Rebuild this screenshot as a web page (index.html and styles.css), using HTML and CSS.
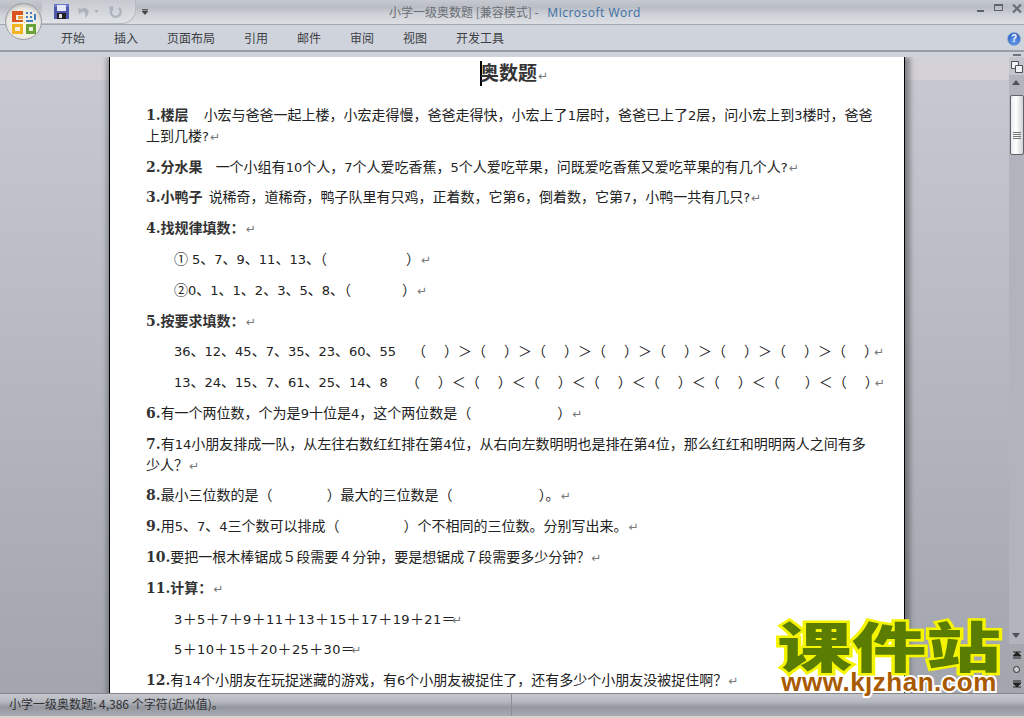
FILE: index.html
```html
<!DOCTYPE html>
<html lang="zh-CN">
<head>
  <meta charset="UTF-8" />
  <title>小学一级奥数题 [兼容模式] - Microsoft Word</title>
  <link rel="stylesheet" href="styles.css">
</head>
<body>
<div class="app">
  <header class="titlebar">
    <div class="qat">
      <svg class="save" width="15" height="15" viewBox="0 0 15 15"><rect width="15" height="15" fill="#4d58ad"/><rect x="0" y="0" width="15" height="3" fill="#6a76c8"/><rect x="3" y="1" width="9" height="6" fill="#e4e8f6"/><rect x="3" y="9" width="9" height="6" fill="#222"/><rect x="5" y="10" width="3" height="4" fill="#ddd"/></svg>
      <svg class="undo" width="14" height="14" viewBox="0 0 14 14"><path d="M1 3 L2 9 L5 7 C8 6 9 8 8 13 C12 10 13 6 10 4 C8 2 6 3 4 4 Z" fill="#aeb3bd"/></svg>
      <svg class="drop" width="5" height="3" viewBox="0 0 5 3"><path d="M0 0 H5 L2.5 3 Z" fill="#aeb3bd"/></svg>
      <svg class="redo" width="13" height="14" viewBox="0 0 13 14"><path d="M3.5 3 A5 5 0 1 0 10 3 M3 1 V6 M3 3 H0" fill="none" stroke="#aeb3bd" stroke-width="2.4"/></svg>
    </div>
    <svg class="qat-more" width="6" height="6" viewBox="0 0 6 6"><path d="M0 0.5 H6 M0 2 H6 L3 5.5 L0 2 Z" fill="#444" stroke="#444" stroke-width="0.8"/></svg>
    <div class="doc-title">小学一级奥数题 [兼容模式] - <span class="word-name">Microsoft Word</span></div>
    <div class="win-btns">
      <span class="win-min"></span>
      <span class="win-max"></span>
      <svg class="win-close" width="10" height="9" viewBox="0 0 10 9"><path d="M1 0.5 L9 8.5 M9 0.5 L1 8.5" stroke="#6a6e75" stroke-width="2.2" fill="none"/></svg>
    </div>
  </header>

  <nav class="tabs">
    <span class="tab">开始</span>
    <span class="tab">插入</span>
    <span class="tab">页面布局</span>
    <span class="tab">引用</span>
    <span class="tab">邮件</span>
    <span class="tab">审阅</span>
    <span class="tab">视图</span>
    <span class="tab">开发工具</span>
    <span class="help">?</span>
  </nav>

  <main class="workspace">
    <div class="page-wrap">
      <article class="page">
        <h1 class="doc-h"><span class="caret"></span>奥数题<i class="pm">↵</i></h1>
        <p><b>1.楼层</b><span class="sp sp15"></span>小宏与爸爸一起上楼，小宏走得慢，爸爸走得快，小宏上了<span class="n">1</span>层时，爸爸已上了<span class="n">2</span>层，问小宏上到<span class="n">3</span>楼时，爸爸上到几楼<span class="n">?</span><i class="pm">↵</i></p>
        <p><b>2.分水果</b><span class="sp sp13"></span>一个小组有<span class="n">10</span>个人，<span class="n">7</span>个人爱吃香蕉，<span class="n">5</span>个人爱吃苹果，问既爱吃香蕉又爱吃苹果的有几个人<span class="n">?</span><i class="pm">↵</i></p>
        <p><b>3.小鸭子</b><span class="sp sp6"></span>说稀奇，道稀奇，鸭子队里有只鸡，正着数，它第<span class="n">6</span>，倒着数，它第<span class="n">7</span>，小鸭一共有几只<span class="n">?</span><i class="pm">↵</i></p>
        <p><b>4.找规律填数：</b><i class="pm">↵</i></p>
        <p class="ind">①<span class="sp sp4"></span><span class="n">5</span>、<span class="n">7</span>、<span class="n">9</span>、<span class="n">11</span>、<span class="n">13</span>、（<span class="gap g1"></span>）<i class="pm">↵</i></p>
        <p class="ind">②<span class="n">0</span>、<span class="n">1</span>、<span class="n">1</span>、<span class="n">2</span>、<span class="n">3</span>、<span class="n">5</span>、<span class="n">8</span>、（<span class="gap g2"></span>）<i class="pm">↵</i></p>
        <p><b>5.按要求填数：</b><i class="pm">↵</i></p>
        <p class="ind"><span class="n">36</span>、<span class="n">12</span>、<span class="n">45</span>、<span class="n">7</span>、<span class="n">35</span>、<span class="n">23</span>、<span class="n">60</span>、<span class="n">55</span><span class="sp sp16"></span>（<span class="gap p"></span>）＞（<span class="gap p"></span>）＞（<span class="gap p"></span>）＞（<span class="gap p"></span>）＞（<span class="gap p"></span>）＞（<span class="gap p"></span>）＞（<span class="gap p"></span>）＞（<span class="gap p"></span>）<i class="pm pm-tight">↵</i></p>
        <p class="ind"><span class="n">13</span>、<span class="n">24</span>、<span class="n">15</span>、<span class="n">7</span>、<span class="n">61</span>、<span class="n">25</span>、<span class="n">14</span>、<span class="n">8</span><span class="sp sp18"></span>（<span class="gap p"></span>）＜（<span class="gap p"></span>）＜（<span class="gap p"></span>）＜（<span class="gap p"></span>）＜（<span class="gap p"></span>）＜（<span class="gap p"></span>）＜（<span class="gap p-wide"></span>）＜（<span class="gap p"></span>）<i class="pm pm-tight">↵</i></p>
        <p><b>6.</b>有一个两位数，个为是<span class="n">9</span>十位是<span class="n">4</span>，这个两位数是（<span class="gap g3"></span>）<i class="pm">↵</i></p>
        <p><b>7.</b>有<span class="n">14</span>小朋友排成一队，从左往右数红红排在第<span class="n">4</span>位，从右向左数明明也是排在第<span class="n">4</span>位，那么红红和明明两人之间有多少人？<i class="pm">↵</i></p>
        <p><b>8.</b>最小三位数的是（<span class="gap g4"></span>）最大的三位数是（<span class="gap g3"></span>）。<i class="pm">↵</i></p>
        <p><b>9.</b>用<span class="n">5</span>、<span class="n">7</span>、<span class="n">4</span>三个数可以排成（<span class="gap g5"></span>）个不相同的三位数。分别写出来。<i class="pm">↵</i></p>
        <p><b>10.</b>要把一根木棒锯成５段需要４分钟，要是想锯成７段需要多少分钟？<i class="pm">↵</i></p>
        <p><b>11.计算：</b><i class="pm">↵</i></p>
        <p class="ind sum"><span class="n">3</span>＋<span class="n">5</span>＋<span class="n">7</span>＋<span class="n">9</span>＋<span class="n">11</span>＋<span class="n">13</span>＋<span class="n">15</span>＋<span class="n">17</span>＋<span class="n">19</span>＋<span class="n">21</span>＝<i class="pm pm-tight">↵</i></p>
        <p class="ind sum"><span class="n">5</span>＋<span class="n">10</span>＋<span class="n">15</span>＋<span class="n">20</span>＋<span class="n">25</span>＋<span class="n">30</span>＝<i class="pm pm-tight">↵</i></p>
        <p><b>12.</b>有<span class="n">14</span>个小朋友在玩捉迷藏的游戏，有<span class="n">6</span>个小朋友被捉住了，还有多少个小朋友没被捉住啊？<i class="pm">↵</i></p>
      </article>
    </div>
    <aside class="scrollbar">
      <div class="sb-top">
        <span class="sb-split"></span>
        <svg class="sb-ruler" width="12" height="12" viewBox="0 0 12 12"><path d="M0.5 0.5 H7.5 V7.5 H0.5 Z" fill="#f2f3f6" stroke="#4c4f55"/><path d="M4.5 4.5 H11.5 V11.5 H4.5 Z" fill="#f2f3f6" stroke="#4c4f55"/></svg>
      </div>
      <div class="sb-up"></div>
      <div class="sb-track">
        <div class="sb-thumb"><span class="sb-grip"></span></div>
      </div>
      <div class="sb-down"></div>
      <div class="sb-nav">
        <svg width="8" height="8" viewBox="0 0 8 8"><path d="M0 1 H8 M4 1 L0 5 H8 Z M0 7 H8" stroke="#222" fill="#222"/></svg>
        <span class="sb-dot"></span>
        <svg width="8" height="8" viewBox="0 0 8 8"><path d="M0 1 H8 M4 7 L0 3 H8 Z M0 7 H8" stroke="#222" fill="#222"/></svg>
      </div>
    </aside>
  </main>

  <footer class="status">
    <div class="status-text">小学一级奥数题: 4,386 个字符(近似值)。</div>
    <div class="status-rest"></div>
  </footer>

  <!-- site watermark sits over the doc -->
  <div class="watermark">
    <div class="wm-cn">课件站</div>
    <div class="wm-url">www.kjzhan.com</div>
  </div>

  <div class="office-btn">
    <svg width="26" height="26" viewBox="0 0 26 26">
      <path d="M1 2 H12 V6 H5 V11 H12 V13 H1 Z" fill="#d9541e"/>
      <path d="M7 7 H12 V10 H7 Z" fill="#f0a040"/>
      <path d="M15 3 H17 V5 H15 Z M19 3 H21 V5 H19 Z M15 7 H17 V9 H15 Z M19 7 H21 V9 H19 Z M23 5 H25 V11 H23 Z M15 11 H22 V13 H15 Z" fill="#3f7fc4"/>
      <path d="M1 15 H12 V25 H1 Z M4 18 V22 H9 V18 Z" fill="#f2b322" fill-rule="evenodd"/>
      <path d="M15 15 H25 V25 H15 Z M18 18 V22 H22 V18 Z" fill="#67a336" fill-rule="evenodd"/>
      <path d="M13 13 H14 V14 H13 Z" fill="#e8b030"/>
    </svg>
  </div>
</div>
</body>
</html>
```

FILE: styles.css
```css
* {
  box-sizing: border-box;
}

html, body {
  margin: 0;
  height: 100%;
  overflow: hidden;
}

body {
  font-family: "Noto Sans CJK SC", sans-serif;
  background-color: #d8d4cc;
}

.app {
  position: relative;
  width: 1024px;
  height: 716px;
  display: flex;
  flex-direction: column;
  overflow: hidden;
}

/* title bar */
.titlebar {
  height: 25px;
  flex-shrink: 0;
  display: flex;
  align-items: flex-start;
  background: linear-gradient(#c6c9cf 0, #b9bdc4 30%, #cfd2d8 62%, #dcdfe4 100%);
  border-bottom: 1px solid #a4a8af;
  position: relative;
}

.qat {
  display: flex;
  align-items: center;
  height: 24px;
  margin-left: 42px;
  padding-left: 12px;
  width: 94px;
  border-right: 1px solid #b6bac1;
  border-bottom: 1px solid #b6bac1;
  border-radius: 0 0 14px 0;
  background: linear-gradient(#c6c9cf, #dfe2e6);
}

.save,
.undo,
.drop,
.redo {
  flex-shrink: 0;
}

.undo {
  margin-left: 8px;
}

.drop {
  margin-left: 3px;
}

.redo {
  margin-left: 10px;
}

.qat-more {
  margin: 9px 0 0 6px;
}

.doc-title {
  position: absolute;
  left: 389px;
  top: 4px;
  font-size: 12px;
  line-height: 16px;
  color: #6a6e75;
  white-space: pre;
}

.word-name {
  color: #3b6ea5;
  font-family: "Open Sans", sans-serif;
  font-size: 12px;
  letter-spacing: 0.5px;
  margin-left: 6px;
}

.win-btns {
  position: absolute;
  right: 0;
  top: 0;
  width: 47px;
  height: 20px;
}

.win-min {
  position: absolute;
  left: 0;
  top: 10px;
  width: 7px;
  height: 2px;
  background: #5e636b;
}

.win-max {
  position: absolute;
  left: 17px;
  top: 4px;
  width: 9px;
  height: 7px;
  border: 1px solid #5e636b;
  border-top-width: 2px;
}

.win-close {
  position: absolute;
  left: 35px;
  top: 4px;
}

/* ribbon tabs */
.tabs {
  height: 32px;
  flex-shrink: 0;
  display: flex;
  padding: 5px 0 0 61px;
  background: linear-gradient(#cfd3dc 0, #cfd3dc 25px, #9a9da4 25px, #9a9da4 27px, #d0d3dc 27px);
  font-size: 12px;
  color: #3d3f44;
  position: relative;
}

.tab {
  margin-right: 29px;
  line-height: 16px;
}

.help {
  position: absolute;
  right: 3px;
  top: 7px;
  width: 14px;
  height: 14px;
  border-radius: 50%;
  background: radial-gradient(circle at 50% 70%, #6aa0ee, #1a4fb0);
  border: 1px solid #8fa8d8;
  color: #fff;
  font: bold 10px/12px "Liberation Sans", sans-serif;
  text-align: center;
}

/* document area */
.workspace {
  flex: 1;
  min-height: 0;
  display: flex;
  background: linear-gradient(#c8cad2, #a2a5ad);
}

.page-wrap {
  flex: 1;
  padding-left: 109px;
  min-width: 0;
  overflow: hidden;
  background: linear-gradient(#d3d0d6 0, #d3d0d6 23px, transparent 23px);
}

.page {
  width: 796px;
  height: 700px;
  background: #fff;
  border-left: 1px solid #000;
  border-right: 1px solid #000;
  padding: 0 30px 0 36px;
  box-shadow: 5px 0 5px rgba(60, 60, 65, 0.5), -3px 0 4px rgba(60, 60, 65, 0.35);
  font-size: 14px;
  line-height: 20.8px;
  color: #222;
}

.page p {
  margin: 0 0 10px;
}

.page b {
  font-family: "DejaVu Serif", "Noto Sans CJK SC", serif;
  line-height: 0;
  color: #333;
}

.n {
  font-family: "DejaVu Sans", sans-serif;
  font-size: 13px;
  line-height: 0;
}

.doc-h {
  margin: 0 0 18px;
  padding: 4px 0 0 8px;
  text-align: center;
  font-size: 19px;
  font-weight: bold;
  line-height: 22px;
  color: #333;
}

.caret {
  display: inline-block;
  width: 2px;
  height: 25px;
  background: #000;
  vertical-align: -6px;
  margin-right: -2px;
}

.pm {
  font-style: normal;
  font-weight: normal;
  font-size: 12px;
  line-height: 0;
  color: #777;
  font-family: "DejaVu Sans", sans-serif;
  margin-left: 1px;
}

.pm-tight {
  margin-left: -4px;
}

.ind {
  padding-left: 28px;
  white-space: nowrap;
}

.sum {
  letter-spacing: 0.36px;
}

.sp,
.gap {
  display: inline-block;
}

.sp4 { width: 4px; }
.sp6 { width: 6px; }
.sp13 { width: 13px; }
.sp15 { width: 15px; }
.sp16 { width: 16px; }
.sp18 { width: 18px; }

.g1 { width: 79px; }
.g2 { width: 51px; }
.g3 { width: 86px; }
.g4 { width: 54px; }
.g5 { width: 64px; }
.p { width: 18px; }
.p-wide { width: 25px; }

/* scrollbar */
.scrollbar {
  width: 15px;
  flex-shrink: 0;
  display: flex;
  flex-direction: column;
  background: #b1b4bc;
}

.sb-top {
  height: 18px;
  flex-shrink: 0;
  position: relative;
  background: #c2c5cc;
}

.sb-split {
  position: absolute;
  left: 4px;
  top: -3px;
  width: 8px;
  height: 2px;
  background: #70747b;
}

.sb-ruler {
  position: absolute;
  left: 2px;
  top: 4px;
}

.sb-up,
.sb-down {
  height: 20px;
  flex-shrink: 0;
  position: relative;
}

.sb-up::after,
.sb-down::after {
  content: "";
  position: absolute;
  left: 3px;
  border-left: 4.5px solid transparent;
  border-right: 4.5px solid transparent;
}

.sb-up::after {
  top: 5px;
  border-bottom: 5px solid #4e5258;
}

.sb-down::after {
  top: 9px;
  border-top: 5px solid #4e5258;
}

.sb-track {
  flex: 1;
  min-height: 0;
}

.sb-thumb {
  height: 60px;
  margin-left: 1px;
  width: 14px;
  border: 1px solid #5f6369;
  border-radius: 2px;
  background: linear-gradient(90deg, #e8eaee, #fff 40%, #d0d2d8);
  display: flex;
  align-items: center;
  justify-content: center;
}

.sb-grip {
  width: 8px;
  height: 7px;
  margin-top: 20px;
  background: repeating-linear-gradient(#777 0, #777 1px, transparent 1px, transparent 2px);
}

.sb-nav {
  height: 49px;
  flex-shrink: 0;
  display: flex;
  flex-direction: column;
  align-items: center;
  justify-content: space-around;
  padding: 4px 0 2px;
  background: #a4a7ae;
}

.sb-dot {
  width: 7px;
  height: 7px;
  border-radius: 50%;
  background: #c8cad0;
  border: 1px solid #333;
}

/* status bar */
.status {
  height: 23px;
  flex-shrink: 0;
  display: flex;
  background: linear-gradient(#c6c8ce 0, #b5b8be 35%, #94979e 60%, #a8abb1 100%);
  border-top: 1px solid #82858b;
  font-size: 12px;
  color: #2f3135;
  line-height: 20px;
}

.status-text {
  width: 512px;
  padding-left: 9px;
  border-right: 1px solid #8a8d93;
}

.status-rest {
  flex: 1;
}

/* watermark */
.watermark {
  position: absolute;
  left: 775px;
  top: 611px;
  width: 228px;
  text-align: center;
}

.wm-cn {
  font-weight: 900;
  font-size: 54px;
  line-height: 68px;
  color: #5a7c00;
  -webkit-text-stroke: 5px #f4f400;
  paint-order: stroke fill;
  white-space: nowrap;
  transform: scaleX(1.38);
}

.wm-url {
  font-family: "Liberation Sans", sans-serif;
  font-weight: bold;
  font-size: 26px;
  line-height: 24px;
  letter-spacing: 0.5px;
  color: #a85a00;
  -webkit-text-stroke: 4px #fff;
  paint-order: stroke fill;
  white-space: nowrap;
  margin-top: -9px;
}

.office-btn {
  position: absolute;
  left: 5px;
  top: 3px;
  width: 37px;
  height: 37px;
  border-radius: 50%;
  background: radial-gradient(circle at 50% 60%, #fffbe8, #e8e6e0 60%, #8d9096 100%);
  border: 1px solid #9a9da3;
  display: flex;
  align-items: center;
  justify-content: center;
}
```
